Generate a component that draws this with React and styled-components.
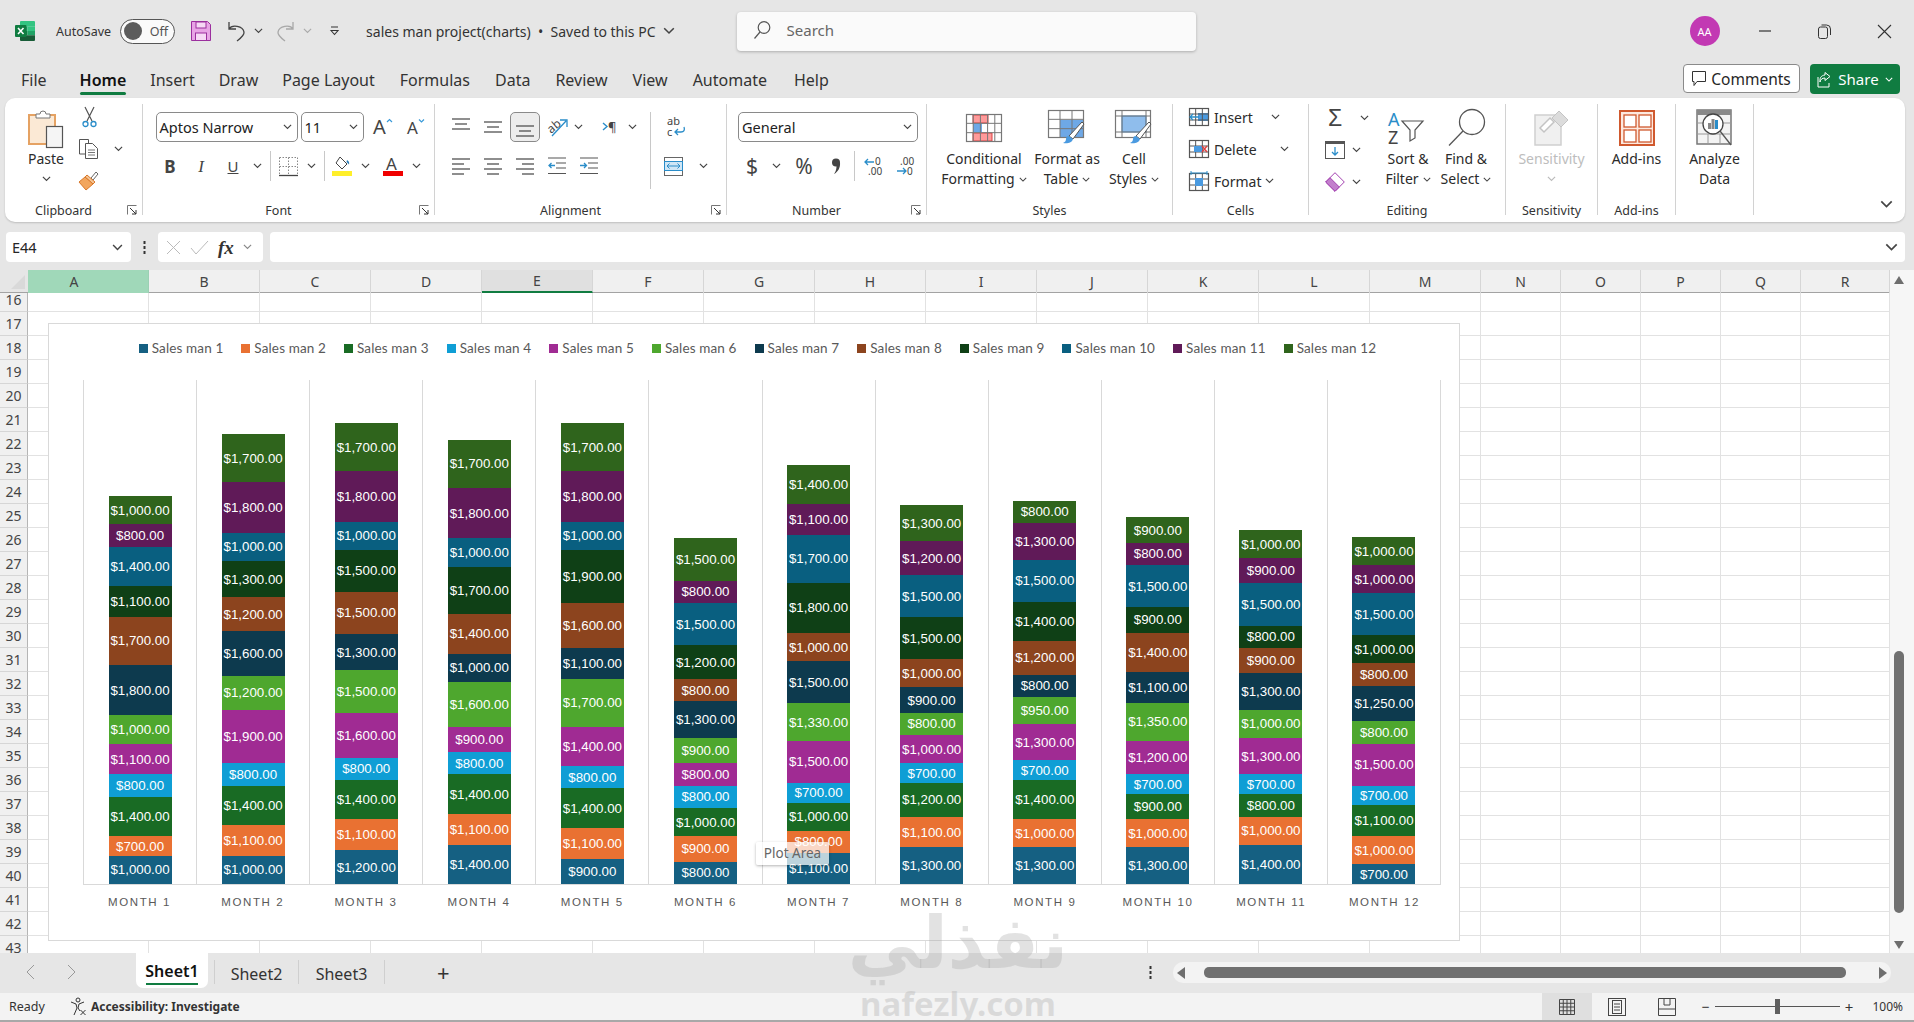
import React from "react";
import styled, { createGlobalStyle } from "styled-components";

const GlobalStyle = createGlobalStyle`
  html, body {
    margin: 0;
    padding: 0;
    background: #e6e6e6;
  }
  * {
    box-sizing: border-box;
  }
`;

const UI_FONT = `"Noto Sans", "Open Sans", sans-serif`;

const Page = styled.div`
  position: relative;
  width: 1914px;
  height: 1022px;
  overflow: hidden;
  background: #e6e6e6;
  font-family: ${UI_FONT};
  color: #262626;
  display: flex;
  flex-direction: column;
`;

/* ---------- title bar ---------- */
const TitleBar = styled.div`
  height: 62px;
  display: flex;
  align-items: center;
  padding-left: 15px;
`;

const TitleItem = styled.div`
  display: flex;
  align-items: center;
  flex-shrink: 0;
  margin-left: ${(p) => p.$ml || 0}px;
  font-size: ${(p) => p.$size || 12.5}px;
  color: ${(p) => p.$color || "#333"};
  white-space: nowrap;
  gap: ${(p) => p.$gap || 0}px;
`;

const Toggle = styled.div`
  width: 55px;
  height: 25px;
  margin-left: 9px;
  border: 1px solid #555;
  border-radius: 13px;
  background: #fafafa;
  display: flex;
  align-items: center;
  flex-shrink: 0;
  padding: 0 6px 0 3px;
  justify-content: space-between;
  font-size: 12.5px;
  color: #555;
`;

const ToggleKnob = styled.span`
  width: 18px;
  height: 18px;
  border-radius: 50%;
  background: #5c5c5c;
`;

const SearchBox = styled.div`
  width: 459px;
  height: 39px;
  margin-left: 62px;
  flex-shrink: 0;
  background: #fafafa;
  border-radius: 4px;
  box-shadow: 0 1px 3px rgba(0, 0, 0, 0.25);
  display: flex;
  align-items: center;
  padding: 0 0 3px 16px;
  gap: 16px;
  font-size: 15px;
  color: #666;
`;

const Avatar = styled.div`
  width: 30px;
  height: 30px;
  margin-left: 494px;
  flex-shrink: 0;
  border-radius: 50%;
  background: #c239b3;
  color: #fff;
  font-size: 11px;
  display: flex;
  align-items: center;
  justify-content: center;
`;

const WinButton = styled.div`
  width: 60px;
  flex-shrink: 0;
  display: flex;
  justify-content: center;
  margin-left: ${(p) => p.$ml || 0}px;
`;

/* ---------- ribbon tabs ---------- */
const TabsRow = styled.div`
  height: 36px;
  display: flex;
  align-items: flex-start;
  padding-left: 21px;
`;

const TabLabel = styled.div`
  position: relative;
  height: 36px;
  line-height: 36px;
  font-size: 16px;
  margin-right: ${(p) => p.$mr || 25}px;
  color: ${(p) => (p.$active ? "#111" : "#333")};
  font-weight: ${(p) => (p.$active ? 600 : 400)};
  white-space: nowrap;
  &::after {
    content: "";
    display: ${(p) => (p.$active ? "block" : "none")};
    position: absolute;
    left: 0;
    right: 0;
    bottom: 3px;
    height: 3px;
    border-radius: 2px;
    background: #107c41;
  }
`;

const TabsRight = styled.div`
  margin-left: auto;
  margin-right: 14px;
  display: flex;
  gap: 10px;
  padding-top: 2px;
`;

const CommentsButton = styled.div`
  width: 117px;
  height: 29px;
  background: #fff;
  border: 1px solid #8a8a8a;
  border-radius: 4px;
  display: flex;
  align-items: center;
  justify-content: center;
  gap: 5px;
  font-size: 15.5px;
`;

const ShareButton = styled.div`
  width: 90px;
  height: 30px;
  background: #107c41;
  border-radius: 4px;
  color: #fff;
  display: flex;
  align-items: center;
  justify-content: center;
  gap: 6px;
  font-size: 15px;
`;

/* ---------- ribbon ---------- */
const Ribbon = styled.div`
  position: relative;
  height: 124px;
  margin: 0 9px 0 5px;
  background: #fff;
  border-radius: 10px;
  box-shadow: 0 1px 2px rgba(0, 0, 0, 0.18);
  display: flex;
  align-items: flex-start;
`;

const RibbonCollapse = styled.div`
  position: absolute;
  right: 12px;
  bottom: 14px;
`;

const Group = styled.div`
  width: ${(p) => p.$w}px;
  height: 111px;
  margin-top: 6px;
  border-right: 1px solid #d2d2d2;
  display: flex;
  flex-direction: column;
  flex-shrink: 0;
`;

const GroupBody = styled.div`
  flex: 1;
  display: flex;
  align-items: flex-start;
  padding-top: ${(p) => p.$pt || 0}px;
  padding-left: ${(p) => p.$pl || 0}px;
`;

const GroupFooter = styled.div`
  display: flex;
  height: 18px;
  margin-bottom: -4px;
  align-items: center;
`;

const GroupLabel = styled.div`
  flex: 1;
  text-align: center;
  font-size: 12.5px;
  color: #333;
  white-space: nowrap;
`;

const Launcher = styled.div`
  width: 20px;
  display: flex;
  justify-content: center;
`;

const ToolRows = styled.div`
  display: flex;
  flex-direction: column;
  gap: ${(p) => p.$gap ?? 9}px;
  margin-top: ${(p) => p.$mt || 0}px;
  width: ${(p) => (p.$w ? `${p.$w}px` : "auto")};
`;

const ToolRow = styled.div`
  display: grid;
  grid-template-columns: ${(p) => p.$cols};
  height: ${(p) => p.$h || 30}px;
  align-items: center;
  justify-items: center;
`;

const Select = styled.div`
  width: ${(p) => p.$w}px;
  height: 30px;
  margin-right: ${(p) => p.$mr || 0}px;
  border: 1px solid #8a8a8a;
  border-radius: 5px;
  display: flex;
  align-items: center;
  justify-content: space-between;
  padding: 0 5px 0 3px;
  font-size: 14.5px;
  color: #222;
  white-space: nowrap;
`;

const SelectedTool = styled.div`
  width: 30px;
  height: 30px;
  background: #ededed;
  border: 1px solid #8a8a8a;
  border-radius: 5px;
  display: flex;
  align-items: center;
  justify-content: center;
`;

const VDivider = styled.div`
  width: 1px;
  height: ${(p) => p.$h || 30}px;
  background: #c8c8c8;
`;

const GlyphText = styled.span`
  font-family: ${(p) => p.$family || UI_FONT};
  font-size: ${(p) => p.$size || 16}px;
  font-weight: ${(p) => p.$weight || 400};
  font-style: ${(p) => (p.$italic ? "italic" : "normal")};
  text-decoration: ${(p) => (p.$underline ? "underline" : "none")};
  color: ${(p) => p.$color || "#444"};
  line-height: 1;
`;

const BigItems = styled.div`
  display: flex;
  padding-left: ${(p) => p.$pl || 0}px;
  margin-top: ${(p) => p.$mt || 0}px;
`;

const BigItem = styled.div`
  width: ${(p) => p.$w}px;
  display: flex;
  flex-direction: column;
  align-items: center;
  font-size: 14px;
  line-height: 20px;
  color: ${(p) => (p.$disabled ? "#bdbdbd" : "#2b2b2b")};
  white-space: nowrap;
`;

const BigIcon = styled.div`
  height: 43px;
  display: flex;
  align-items: ${(p) => p.$align || "center"};
  justify-content: center;
`;

const BigLine = styled.div`
  height: 20px;
  display: flex;
  align-items: center;
  gap: 4px;
`;

const CellRow = styled.div`
  height: 28px;
  display: flex;
  align-items: center;
  font-size: 14px;
  color: #2b2b2b;
`;

const CellText = styled.span`
  margin-left: 5px;
  width: ${(p) => p.$w}px;
`;

const IconSlot = styled.span`
  width: 20px;
  display: flex;
  justify-content: center;
`;

const ClipSide = styled.div`
  display: grid;
  grid-template-columns: 22px 36px;
  grid-auto-rows: 28px;
  row-gap: 4px;
  align-items: center;
  justify-items: center;
  margin-left: 11px;
  margin-top: -3px;
`;

/* ---------- formula bar ---------- */
const FormulaBar = styled.div`
  height: 30px;
  margin: 10px 9px 8px 6px;
  display: flex;
  align-items: stretch;
`;

const NameBox = styled.div`
  width: 125px;
  background: #fff;
  border-radius: 4px;
  display: flex;
  align-items: center;
  justify-content: space-between;
  padding: 0 8px 0 6px;
  font-size: 14.5px;
`;

const DotsSlot = styled.div`
  width: 27px;
  display: flex;
  align-items: center;
  justify-content: center;
`;

const FxBox = styled.div`
  width: 105px;
  background: #fff;
  border-radius: 4px;
  display: flex;
  align-items: center;
  padding-left: 8px;
  gap: 9px;
`;

const FormulaInput = styled.div`
  flex: 1;
  margin-left: 7px;
  background: #fff;
  border-radius: 4px;
  display: flex;
  align-items: center;
  justify-content: flex-end;
  padding-right: 7px;
`;

/* ---------- sheet ---------- */
const SheetArea = styled.div`
  position: relative;
  height: 683px;
  display: flex;
  overflow: hidden;
`;

const SheetMain = styled.div`
  width: 1890px;
  background: #fff;
  overflow: hidden;
`;

const HeaderRow = styled.div`
  position: relative;
  z-index: 1;
  height: 23px;
  display: flex;
  background: #f0f0f0;
  border-bottom: 1px solid #a3a3a3;
`;

const Corner = styled.div`
  width: 28px;
  background: #e6e6e6;
  display: flex;
  align-items: flex-end;
  justify-content: flex-end;
  padding: 0 3px 3px 0;
`;

const ColHead = styled.div`
  width: ${(p) => p.$w}px;
  height: 23px;
  padding-right: ${(p) => (p.$state === "full" ? 28 : 0)}px;
  border-right: 1px solid ${(p) => (p.$state === "full" ? "#9bd0b4" : "#d6d6d6")};
  background: ${(p) =>
    p.$state === "full" ? "#a0d8b9" : p.$state === "cell" ? "#e0e0e0" : "transparent"};
  border-bottom: ${(p) => (p.$state === "cell" ? "2px solid #107c41" : "none")};
  display: flex;
  align-items: center;
  justify-content: center;
  font-size: 14px;
  color: #444;
`;

const GridRows = styled.div`
  margin-top: -5px;
`;

const GridRow = styled.div`
  display: flex;
  height: 24px;
`;

const RowHead = styled.div`
  width: 28px;
  background: #f0f0f0;
  border-right: 1px solid #b5b5b5;
  border-bottom: 1px solid #d6d6d6;
  display: flex;
  align-items: center;
  justify-content: center;
  font-size: 14px;
  color: #444;
`;

const Cell = styled.div`
  width: ${(p) => p.$w}px;
  border-right: 1px solid #e2e2e2;
  border-bottom: 1px solid #e2e2e2;
`;

const VScroll = styled.div`
  width: 24px;
  background: #f6f6f6;
  display: flex;
  flex-direction: column;
  align-items: center;
  justify-content: space-between;
  padding: 6px 7px 4px 0;
`;

const VThumb = styled.div`
  width: 10px;
  height: 262px;
  margin-top: 358px;
  margin-bottom: 20px;
  border-radius: 5px;
  background: #707070;
`;

/* ---------- chart (floats over the cells) ---------- */
const Chart = styled.div`
  position: absolute;
  left: 48px;
  top: 53px;
  width: 1412px;
  height: 618px;
  background: #fff;
  border: 1px solid #d9d9d9;
  z-index: 2;
  display: flex;
  flex-direction: column;
`;

const Legend = styled.div`
  height: 56px;
  padding: 15px 0 0 7px;
  display: flex;
  justify-content: center;
  align-items: flex-start;
  gap: 18px;
`;

const LegendItem = styled.div`
  display: flex;
  align-items: center;
  gap: 4px;
  height: 18px;
  font-family: Lato, "Liberation Sans", sans-serif;
  font-size: 13.5px;
  letter-spacing: 0.13px;
  color: #595959;
  white-space: nowrap;
`;

const Swatch = styled.span`
  width: 9px;
  height: 9px;
  background: ${(p) => p.$color};
`;

const Plot = styled.div`
  margin-left: 34px;
  width: 1358px;
  height: 505px;
  display: grid;
  grid-template-columns: repeat(12, 1fr);
  border-bottom: 1px solid #d9d9d9;
  border-right: 1px solid #d9d9d9;
`;

const PlotCol = styled.div`
  border-left: 1px solid #d9d9d9;
  display: flex;
  flex-direction: column;
  justify-content: flex-end;
  align-items: center;
`;

const Segment = styled.div`
  width: 63px;
  background: ${(p) => p.$color};
  color: #fff;
  font-family: "Liberation Sans", Arial, sans-serif;
  font-size: 13.3px;
  display: flex;
  align-items: center;
  justify-content: center;
  white-space: nowrap;
  overflow: visible;
`;

const Categories = styled.div`
  margin-left: 34px;
  width: 1358px;
  display: grid;
  grid-template-columns: repeat(12, 1fr);
  padding-top: 9px;
`;

const Category = styled.div`
  text-align: center;
  font-family: "Liberation Sans", sans-serif;
  font-size: 11.5px;
  line-height: 16px;
  letter-spacing: 1.6px;
  color: #595959;
  white-space: nowrap;
`;

const Tooltip = styled.div`
  position: absolute;
  left: 756px;
  top: 572px;
  z-index: 3;
  width: 73px;
  height: 23px;
  background: rgba(255, 255, 255, 0.72);
  border-radius: 2px;
  box-shadow: 0 1px 3px rgba(0, 0, 0, 0.3);
  font-size: 13.5px;
  line-height: 23px;
  text-align: center;
  color: #666;
`;

/* ---------- sheet tabs ---------- */
const SheetTabs = styled.div`
  height: 40px;
  display: flex;
  align-items: flex-start;
  background: #e6e6e6;
`;

const NavArrows = styled.div`
  width: 136px;
  height: 38px;
  display: flex;
  align-items: center;
  gap: 32px;
  padding-left: 26px;
`;

const SheetTab = styled.div`
  position: relative;
  width: ${(p) => p.$w}px;
  height: 35px;
  display: flex;
  align-items: center;
  justify-content: center;
  font-size: 16px;
  color: #333;
  ${(p) =>
    p.$active
      ? `
    background: #fff;
    color: #111;
    font-weight: 600;
    border-radius: 0 0 7px 7px;
    &::after {
      content: "";
      position: absolute;
      left: 10px;
      right: 10px;
      bottom: 3px;
      height: 2px;
      background: #107c41;
    }`
      : `margin-top: 3px;`}
`;

const TabSep = styled.div`
  width: 1px;
  height: 24px;
  margin: 7px ${(p) => p.$mr || 0}px 0 ${(p) => p.$ml || 0}px;
  background: #cfcfcf;
`;

const AddSheet = styled.div`
  margin-left: 52px;
  height: 38px;
  display: flex;
  align-items: center;
  font-size: 22px;
  color: #333;
`;

const HBarDots = styled.div`
  margin-left: auto;
  height: 38px;
  display: flex;
  align-items: center;
  margin-right: 21px;
`;

const HScroll = styled.div`
  width: 718px;
  height: 21px;
  margin: 9px 23px 0 0;
  background: #f3f3f3;
  border-radius: 10px;
  display: flex;
  align-items: center;
  justify-content: space-between;
  padding: 0 4px;
`;

const HThumb = styled.div`
  width: 642px;
  height: 11px;
  margin-right: 14px;
  border-radius: 5px;
  background: #707070;
`;

/* ---------- status bar ---------- */
const StatusBar = styled.div`
  height: 27px;
  background: #f3f3f3;
  display: flex;
  align-items: center;
  font-size: 12.5px;
  color: #333;
  padding-left: 9px;
`;

const StatusBold = styled.span`
  font-weight: 700;
  margin-left: 4px;
  font-size: 12px;
`;

const StatusRight = styled.div`
  margin-left: auto;
  height: 27px;
  display: flex;
  align-items: center;
  padding-right: 11px;
`;

const ViewButton = styled.div`
  width: 50px;
  height: 27px;
  display: flex;
  align-items: center;
  justify-content: center;
  background: ${(p) => (p.$active ? "#dfdfdf" : "transparent")};
`;

const ZoomTrack = styled.div`
  position: relative;
  width: 125px;
  height: 1px;
  margin: 0 5px;
  background: #555;
`;

const ZoomKnob = styled.span`
  position: absolute;
  left: 60px;
  top: -7px;
  width: 5px;
  height: 15px;
  background: #5f5f5f;
`;

const BottomLine = styled.div`
  height: 2px;
  background: #a8a8a8;
`;

/* ---------- watermark ---------- */
const Watermark = styled.div`
  position: absolute;
  left: 846px;
  top: 910px;
  width: 224px;
  z-index: 5;
  pointer-events: none;
  text-align: center;
  color: rgba(170, 170, 170, 0.34);
  font-weight: 700;
`;

const WatermarkAr = styled.div`
  font-family: "DejaVu Sans", "Noto Sans", sans-serif;
  font-size: 72px;
  line-height: 66px;
`;

const WatermarkEn = styled.div`
  font-family: "Noto Sans", sans-serif;
  font-size: 33px;
  line-height: 30px;
  margin-top: 13px;
`;

/* ---------- icons ---------- */
const Svg = styled.svg`
  display: block;
  flex-shrink: 0;
  overflow: visible;
`;

const Chev = ({ size = 9, color = "#444", ml = 0 }) => (
  <Svg width={size} height={size * 0.6} viewBox="0 0 10 6" style={ml ? { marginLeft: ml } : undefined}>
    <path d="M1 1l4 4 4-4" fill="none" stroke={color} strokeWidth="1.3" />
  </Svg>
);

const ExcelLogo = () => (
  <Svg width="20" height="20" viewBox="0 0 20 20">
    <path d="M6 0h13a1 1 0 011 1v4.8H5V1a1 1 0 011-1z" fill="#33c481" />
    <path d="M5 5.8h7.5v4.2H5z" fill="#21a366" />
    <path d="M12.5 5.8H20V10h-7.5z" fill="#33c481" />
    <path d="M5 10h7.5v4.2H5z" fill="#107c41" />
    <path d="M12.5 10H20v4.2h-7.5z" fill="#21a366" />
    <path d="M5 14.2h15V19a1 1 0 01-1 1H6a1 1 0 01-1-1z" fill="#185c37" />
    <rect x="0" y="4" width="11.5" height="12" rx="1" fill="#107c41" />
    <path d="M3 7l5.5 6M8.5 7L3 13" stroke="#fff" strokeWidth="1.6" />
  </Svg>
);

const SaveIcon = () => (
  <Svg width="20" height="20" viewBox="0 0 20 20">
    <path d="M.5.5h16l3 3v16H.5z" fill="#e7a3e5" stroke="#9b2f9e" />
    <rect x="5" y="1" width="10" height="6" fill="#f6d8f5" stroke="#9b2f9e" />
    <rect x="4.5" y="12" width="11" height="7.5" fill="#f6d8f5" stroke="#9b2f9e" />
  </Svg>
);

const UndoIcon = ({ flip, color }) => (
  <Svg width="19" height="21" viewBox="0 0 19 21" style={flip ? { transform: "scaleX(-1)" } : undefined}>
    <path d="M2 1v7h7M2 8c3-5 14-3 15 3 .5 3-3 6-7 9" fill="none" stroke={color} strokeWidth="1.3" />
  </Svg>
);

const QuickAccess = () => (
  <Svg width="11" height="10" viewBox="0 0 11 10">
    <path d="M2 1h7M2 4.500l3.500 4 3.500-4z" fill="none" stroke="#333" strokeWidth="1.1" />
  </Svg>
);

const SearchIcon = () => (
  <Svg width="18" height="20" viewBox="0 0 18 20">
    <circle cx="11" cy="7.500" r="5.800" fill="none" stroke="#555" strokeWidth="1.200" />
    <path d="M7 12L1.500 18.500" stroke="#555" strokeWidth="1.200" />
  </Svg>
);

const PasteIcon = () => (
  <Svg width="36" height="40" viewBox="0 0 36 40">
    <rect x="1" y="6" width="26" height="29" fill="#fbe9d5" stroke="#e5a263" strokeWidth="2" />
    <path d="M8 9V5h4a3 3 0 016 0h4v4z" fill="#fff" stroke="#777" />
    <rect x="18.500" y="17.500" width="16" height="21" fill="#f5f5f5" stroke="#555" strokeWidth="1.200" />
  </Svg>
);

const CutIcon = () => (
  <Svg width="15" height="21" viewBox="0 0 15 21">
    <path d="M3 0l7 14M12 0L5 14" stroke="#555" strokeWidth="1.200" fill="none" />
    <circle cx="3.500" cy="17" r="2.500" fill="none" stroke="#2a8dc9" strokeWidth="1.300" />
    <circle cx="11.500" cy="17" r="2.500" fill="none" stroke="#2a8dc9" strokeWidth="1.300" />
  </Svg>
);

const CopyIcon = () => (
  <Svg width="20" height="20" viewBox="0 0 20 20">
    <path d="M6 15H.5V.5h9V4" fill="#fff" stroke="#555" />
    <path d="M6.500 4.500h7l5 5v10h-12z" fill="#fff" stroke="#555" />
    <path d="M9 11h7M9 13.500h7M9 16h7" stroke="#777" />
  </Svg>
);

const BrushIcon = () => (
  <Svg width="20" height="20" viewBox="0 0 20 20">
    <path d="M12 7l5-6 2 2-5 6z" fill="#fff" stroke="#666" />
    <path d="M8 4l8 7-2 2-8-7z" fill="#f5c493" stroke="#d9782a" />
    <path d="M6 6L0 11l7 8 7-6z" fill="#f2a65e" stroke="#d9782a" />
  </Svg>
);

const LauncherIcon = () => (
  <Svg width="10" height="10" viewBox="0 0 10 10">
    <path d="M.5 9.500V.5h9" fill="none" stroke="#777" />
    <path d="M3 3l6 6M5 9h4V5" fill="none" stroke="#333" />
  </Svg>
);

const GrowFont = ({ up }) => (
  <Svg width="22" height="26" viewBox="0 0 22 26">
    <text x="0" y="20" fontFamily="Noto Sans" fontSize={up ? 20 : 17} fill="#444">A</text>
    <path d={up ? "M14 8l2.500-2.500L19 8" : "M12 5.500L14.500 8 17 5.500"} fill="none" stroke="#3a9ad9" strokeWidth="1.200" />
  </Svg>
);

const BordersIcon = () => (
  <Svg width="19" height="19" viewBox="0 0 19 19">
    <path d="M.5.5h18v18M.5.5v18M9.500.5v18M.5 9.500h18" fill="none" stroke="#888" strokeDasharray="1.500 1.500" />
    <path d="M0 18.500h19" stroke="#444" strokeWidth="1.300" />
  </Svg>
);

const FillIcon = () => (
  <Svg width="21" height="20" viewBox="0 0 21 20">
    <path d="M8 1l7 7-5 5-6-6z" fill="#fff" stroke="#444" />
    <path d="M15 4c2 1 2.500 3 2 4.500L14.500 6z" fill="#2a7db8" />
    <rect x="0" y="15" width="20" height="5" fill="#ffef2a" />
  </Svg>
);

const FontColorIcon = () => (
  <Svg width="20" height="26" viewBox="0 0 20 26">
    <text x="3" y="16.500" fontFamily="Noto Sans" fontSize="17" fill="#444">A</text>
    <rect x="0" y="18" width="20" height="5" fill="#f00000" />
  </Svg>
);

const LinesIcon = ({ rows }) => (
  <Svg width="18" height="24" viewBox="0 0 18 24">
    {rows.map(([x1, x2, y], i) => (
      <path key={i} d={`M${x1} ${y}h${x2 - x1}`} stroke="#444" strokeWidth="1.200" />
    ))}
  </Svg>
);

const IndentIcon = ({ out }) => (
  <Svg width="18" height="18" viewBox="0 0 18 18">
    <path d="M0 1h18M8 6h10M8 11h10M0 16.500h18" stroke="#555" strokeWidth="1.200" />
    <path
      d={out ? "M7 8.500H1M3.500 6L1 8.500 3.500 11" : "M0 8.500h6M4 6l2.500 2.500L4 11"}
      fill="none"
      stroke="#2a8dc9"
      strokeWidth="1.300"
    />
  </Svg>
);

const OrientIcon = () => (
  <Svg width="21" height="24" viewBox="0 0 21 24">
    <text x="0" y="16" fontFamily="Noto Sans" fontSize="12" fill="#444" transform="rotate(-40 6 12)">ab</text>
    <path d="M5 21L19 6M13 5h7v7" fill="none" stroke="#2a8dc9" strokeWidth="1.300" />
  </Svg>
);

const RtlIcon = () => (
  <Svg width="16" height="20" viewBox="0 0 16 20">
    <path d="M1 6l4 3.500L1 13" fill="none" stroke="#2a8dc9" strokeWidth="1.400" />
    <text x="6" y="15" fontFamily="Noto Sans" fontSize="13" fill="#444">¶</text>
  </Svg>
);

const WrapIcon = () => (
  <Svg width="19" height="24" viewBox="0 0 19 24">
    <text x="0" y="10" fontFamily="Noto Sans" fontSize="11" fill="#444">ab</text>
    <text x="0" y="21" fontFamily="Noto Sans" fontSize="11" fill="#444">c</text>
    <path d="M17 12c1 3 0 5-3 5H8M11 14l-3 3 3 3" fill="none" stroke="#2a8dc9" strokeWidth="1.300" />
  </Svg>
);

const MergeIcon = () => (
  <Svg width="19" height="19" viewBox="0 0 19 19">
    <rect x=".5" y=".5" width="18" height="18" fill="#fff" stroke="#666" />
    <rect x=".5" y="4.500" width="18" height="9" fill="#cfe6f6" stroke="#2a8dc9" />
    <path d="M3 9h13M5.500 6.500L3 9l2.500 2.500M13.500 6.500L16 9l-2.500 2.500" fill="none" stroke="#2a8dc9" />
  </Svg>
);

const CommaIcon = () => (
  <Svg width="10" height="17" viewBox="0 0 10 17">
    <circle cx="5" cy="4.500" r="4" fill="#444" />
    <path d="M9 4.500c.5 5-2 9.500-6 11.500 2-3 2.500-5 2.500-8z" fill="#444" />
  </Svg>
);

const DecimalIcon = ({ inc }) => (
  <Svg width="21" height="24" viewBox="0 0 21 24">
    <text x={inc ? 11 : 4} y="11" fontFamily="Noto Sans" fontSize="10" fill="#444">{inc ? "0" : ".00"}</text>
    <text x={inc ? 4 : 11} y="21" fontFamily="Noto Sans" fontSize="10" fill="#444">{inc ? ".00" : "0"}</text>
    <path
      d={inc ? "M10 8H1M4 5L1 8l3 3" : "M1 17h9M7 14l3 3-3 3"}
      fill="none"
      stroke="#2a8dc9"
      strokeWidth="1.300"
    />
  </Svg>
);

const TableFrame = ({ w, h, cols, rows, color = "#777" }) => (
  <g fill="none" stroke={color}>
    <rect x=".5" y=".5" width={w - 1} height={h - 1} strokeWidth="1.200" />
    {Array.from({ length: cols - 1 }, (_, i) => (
      <path key={`c${i}`} d={`M${((i + 1) * w) / cols} 0v${h}`} />
    ))}
    {Array.from({ length: rows - 1 }, (_, i) => (
      <path key={`r${i}`} d={`M0 ${((i + 1) * h) / rows}h${w}`} />
    ))}
  </g>
);

const ConditionalIcon = () => (
  <Svg width="36" height="28" viewBox="0 0 36 28">
    <rect x="7" y="1" width="15" height="8" fill="#ff9a9a" stroke="#d94040" />
    <rect x="7" y="9" width="9" height="9" fill="#6ea8e6" />
    <rect x="7" y="19" width="19" height="8" fill="#ff9a9a" stroke="#d94040" />
    <TableFrame w={36} h={28} cols={5} rows={3} />
  </Svg>
);

const BrushOver = ({ x, y }) => (
  <g transform={`translate(${x} ${y})`}>
    <path d="M20 0l2 2L11 17l-4-3z" fill="#fff" stroke="#555" />
    <path d="M7 14l4 3c-1 4-6 5-10 4 2-1 3-2 3-4 0-2 1-3 3-3z" fill="#4a9ae0" />
  </g>
);

const FormatTableIcon = () => (
  <Svg width="38" height="36" viewBox="0 0 38 36">
    <rect x="12" y="10" width="24" height="18" fill="#6ea8e6" />
    <TableFrame w={36} h={28} cols={3} rows={3} />
    <BrushOver x="14" y="12" />
  </Svg>
);

const CellStylesIcon = () => (
  <Svg width="38" height="36" viewBox="0 0 38 36">
    <rect x="7" y="6" width="24" height="16" fill="#8fbdec" stroke="#4a8fd0" />
    <g fill="none" stroke="#777">
      <rect x=".5" y=".5" width="35" height="27" strokeWidth="1.200" />
      <path d="M0 6h36M7 0v28M31 0v28M0 22h36" />
    </g>
    <BrushOver x="14" y="12" />
  </Svg>
);

const InsertCellsIcon = () => (
  <Svg width="20" height="18" viewBox="0 0 20 18">
    <rect x="9" y="5" width="10" height="8" fill="#4a9ae0" />
    <TableFrame w={20} h={18} cols={3} rows={3} color="#555" />
    <path d="M10 9H1M4 6L1 9l3 3" fill="none" stroke="#2a8dc9" strokeWidth="1.300" />
  </Svg>
);

const DeleteCellsIcon = () => (
  <Svg width="20" height="18" viewBox="0 0 20 18">
    <TableFrame w={20} h={18} cols={3} rows={3} color="#555" />
    <rect x="5" y="6" width="8" height="6" fill="#4a9ae0" />
    <path d="M13 6l5 6M18 6l-5 6" stroke="#e04040" strokeWidth="1.400" />
  </Svg>
);

const FormatCellsIcon = () => (
  <Svg width="20" height="20" viewBox="0 0 20 20">
    <g transform="translate(0 2)">
      <TableFrame w={20} h={18} cols={3} rows={3} color="#555" />
      <rect x="6" y="5" width="8" height="8" fill="#4a9ae0" />
    </g>
    <path d="M2 2h16M2 0v4M18 0v4" stroke="#2a8dc9" />
  </Svg>
);

const FillDownIcon = () => (
  <Svg width="20" height="18" viewBox="0 0 20 18">
    <rect x=".5" y=".5" width="19" height="17" fill="#fff" stroke="#555" />
    <rect x="0" y="0" width="20" height="3" fill="#555" />
    <path d="M10 6v8M7 11l3 3 3-3" fill="none" stroke="#2a8dc9" strokeWidth="1.300" />
  </Svg>
);

const EraserIcon = () => (
  <Svg width="20" height="20" viewBox="0 0 20 20">
    <path d="M10 .7L19.300 10 10 19.300.7 10z" fill="#fff" stroke="#a340b0" />
    <path d="M5 5.700L14.300 15 10 19.300.7 10z" fill="#c27fcc" stroke="#a340b0" />
  </Svg>
);

const SortIcon = () => (
  <Svg width="41" height="40" viewBox="0 0 41 40">
    <text x="0" y="18" fontFamily="Noto Sans" fontSize="18" fill="#2a8dc9">A</text>
    <text x="0" y="36" fontFamily="Noto Sans" fontSize="18" fill="#444">Z</text>
    <path d="M14 13h21l-8 9v8l-5 3V22z" fill="#fff" stroke="#555" strokeWidth="1.200" />
  </Svg>
);

const FindIcon = () => (
  <Svg width="37" height="37" viewBox="0 0 37 37">
    <circle cx="24" cy="13" r="12.500" fill="#fff" stroke="#555" strokeWidth="1.300" />
    <path d="M15 22L1 36.500" stroke="#555" strokeWidth="1.300" />
  </Svg>
);

const SensitivityIcon = () => (
  <Svg width="35" height="36" viewBox="0 0 35 36">
    <rect x="1" y="5" width="26" height="30" fill="#f0f0f0" stroke="#cfcfcf" strokeWidth="1.500" />
    <path d="M6 18L16 8l4 4-10 10z" fill="#fff" stroke="#c4c4c4" strokeWidth="1.500" />
    <path d="M18 8l7-7 9 9-7 7z" fill="#dcdcdc" stroke="#c4c4c4" />
  </Svg>
);

const AddinsIcon = () => (
  <Svg width="36" height="36" viewBox="0 0 36 36">
    <rect x="1" y="1" width="34" height="34" fill="#fde9df" stroke="#d0592e" strokeWidth="2" />
    <rect x="5" y="5" width="12" height="12" fill="#fff" stroke="#d0592e" strokeWidth="1.300" />
    <rect x="20" y="5" width="12" height="12" fill="#fff" stroke="#d0592e" strokeWidth="1.300" />
    <rect x="5" y="20" width="12" height="12" fill="#fff" stroke="#d0592e" strokeWidth="1.300" />
    <rect x="20" y="20" width="12" height="12" fill="#fff" stroke="#d0592e" strokeWidth="1.300" />
  </Svg>
);

const AnalyzeIcon = () => (
  <Svg width="37" height="37" viewBox="0 0 37 37">
    <rect x="1" y="1" width="34" height="34" fill="#f3f3f3" stroke="#777" strokeWidth="1.500" />
    <rect x="1" y="1" width="34" height="5" fill="#888" />
    <path d="M1 14h34M1 25h34M12 25v10M24 25v10" stroke="#999" />
    <circle cx="17" cy="15" r="10" fill="#fff" stroke="#444" strokeWidth="1.300" />
    <rect x="12" y="14" width="3" height="6" fill="#888" />
    <rect x="15.500" y="10" width="3" height="10" fill="#888" />
    <rect x="19" y="11" width="3" height="9" fill="#2a8dc9" />
    <path d="M24 22l11 14" stroke="#555" strokeWidth="1.300" />
  </Svg>
);

const AccessibilityIcon = () => (
  <Svg width="17" height="19" viewBox="0 0 17 19">
    <circle cx="8" cy="3" r="2" fill="none" stroke="#333" />
    <path d="M1 5l5 2 1 4-3 7M14 5L9 7l-1 4 2 3" fill="none" stroke="#333" />
    <path d="M10.500 13l5 5M15.500 13l-5 5" stroke="#333" />
  </Svg>
);

const NormalViewIcon = () => (
  <Svg width="16" height="16" viewBox="0 0 16 16">
    <path d="M.5.500h15v15H.5zM.5 4.250h15M.5 8h15M.5 11.750h15M4.250 0v16M8 0v16M11.750 0v16" fill="none" stroke="#444" />
  </Svg>
);

const PageViewIcon = () => (
  <Svg width="18" height="18" viewBox="0 0 18 18">
    <rect x=".5" y=".5" width="17" height="17" fill="none" stroke="#444" />
    <rect x="4.500" y="2.500" width="9" height="13" fill="none" stroke="#444" />
    <path d="M6 6h6M6 9h6M6 12h6" stroke="#444" />
  </Svg>
);

const BreakViewIcon = () => (
  <Svg width="18" height="18" viewBox="0 0 18 18">
    <path d="M.5.500h17v17H.5zM.5 11h17M6 .5V7h6V.5" fill="none" stroke="#444" />
  </Svg>
);

/* ---------- data ---------- */
const COLORS = [
  "#156082", "#e97132", "#196b24", "#0f9ed5", "#a02b93", "#4ea72e",
  "#0d3a4e", "#8c441e", "#0f4016", "#095f80", "#601a58", "#2f641c",
];

const MONTHS = [
  [1000, 700, 1400, 800, 1100, 1000, 1800, 1700, 1100, 1400, 800, 1000],
  [1000, 1100, 1400, 800, 1900, 1200, 1600, 1200, 1300, 1000, 1800, 1700],
  [1200, 1100, 1400, 800, 1600, 1500, 1300, 1500, 1500, 1000, 1800, 1700],
  [1400, 1100, 1400, 800, 900, 1600, 1000, 1400, 1700, 1000, 1800, 1700],
  [900, 1100, 1400, 800, 1400, 1700, 1100, 1600, 1900, 1000, 1800, 1700],
  [800, 900, 1000, 800, 800, 900, 1300, 800, 1200, 1500, 800, 1500],
  [1100, 800, 1000, 700, 1500, 1330, 1500, 1000, 1800, 1700, 1100, 1400],
  [1300, 1100, 1200, 700, 1000, 800, 900, 1000, 1500, 1500, 1200, 1300],
  [1300, 1000, 1400, 700, 1300, 950, 800, 1200, 1400, 1500, 1300, 800],
  [1300, 1000, 900, 700, 1200, 1350, 1100, 1400, 900, 1500, 800, 900],
  [1400, 1000, 800, 700, 1300, 1000, 1300, 900, 800, 1500, 900, 1000],
  [700, 1000, 1100, 700, 1500, 800, 1250, 800, 1000, 1500, 1000, 1000],
];

const COLUMNS = [
  ["A", 121], ["B", 111], ["C", 111], ["D", 111], ["E", 111], ["F", 111], ["G", 111],
  ["H", 111], ["I", 111], ["J", 111], ["K", 111], ["L", 111], ["M", 111],
  ["N", 80], ["O", 80], ["P", 80], ["Q", 80], ["R", 89],
];

const ROWS = Array.from({ length: 28 }, (_, i) => i + 16);
const TABS = [
  ["File", 33], ["Home", 24], ["Insert", 24], ["Draw", 24], ["Page Layout"], ["Formulas"],
  ["Data"], ["Review"], ["View"], ["Automate", 27], ["Help"],
];
const money = (v) => `$${v.toLocaleString("en-US")}.00`;
const PX_PER_DOLLAR = 0.0281;

const GroupEnd = ({ label, launcher }) => (
  <GroupFooter>
    <GroupLabel>{label}</GroupLabel>
    {launcher && (
      <Launcher>
        <LauncherIcon />
      </Launcher>
    )}
  </GroupFooter>
);

const ToolbarRibbon = () => (
  <Ribbon>
    <Group $w={138}>
      <GroupBody $pl={20} $pt={2}>
        <BigItem $w={42}>
          <BigIcon $align="flex-end">
            <PasteIcon />
          </BigIcon>
          <BigLine>Paste</BigLine>
          <BigLine>
            <Chev />
          </BigLine>
        </BigItem>
        <ClipSide>
          <CutIcon />
          <span />
          <CopyIcon />
          <Chev />
          <BrushIcon />
          <span />
        </ClipSide>
      </GroupBody>
      <GroupEnd label="Clipboard" launcher />
    </Group>

    <Group $w={292}>
      <GroupBody $pt={8} $pl={11}>
        <ToolRows>
          <ToolRow $cols="145px 66px 38px 30px">
            <Select $w={142}>
              Aptos Narrow
              <Chev />
            </Select>
            <Select $w={63}>
              11
              <Chev />
            </Select>
            <GrowFont up />
            <GrowFont />
          </ToolRow>
          <ToolRow $cols="32px 30px 34px 14px 12px 24px 22px 4px 32px 14px 42px 4px">
            <GlyphText $weight={700} $size={17}>B</GlyphText>
            <GlyphText $italic $family="'Liberation Serif', serif" $size={17}>I</GlyphText>
            <GlyphText $underline $size={15}>U</GlyphText>
            <Chev />
            <VDivider />
            <BordersIcon />
            <Chev />
            <VDivider />
            <FillIcon />
            <Chev />
            <FontColorIcon />
            <Chev />
          </ToolRow>
        </ToolRows>
      </GroupBody>
      <GroupEnd label="Font" launcher />
    </Group>

    <Group $w={292}>
      <GroupBody $pt={8} $pl={10}>
        <ToolRows $w={205}>
          <ToolRow $cols="32px 32px 32px 32px 10px 7px 40px 4px">
            <LinesIcon rows={[[0, 18, 4], [3, 15, 9], [0, 18, 14]]} />
            <LinesIcon rows={[[0, 18, 7], [3, 15, 12], [0, 18, 17]]} />
            <SelectedTool>
              <LinesIcon rows={[[0, 18, 11], [3, 15, 16], [0, 18, 21]]} />
            </SelectedTool>
            <OrientIcon />
            <Chev />
            <span />
            <RtlIcon />
            <Chev />
          </ToolRow>
          <ToolRow $cols="32px 32px 32px 32px 32px">
            <LinesIcon rows={[[0, 18, 5], [0, 12, 10], [0, 18, 15], [0, 12, 20]]} />
            <LinesIcon rows={[[0, 18, 5], [3, 15, 10], [0, 18, 15], [3, 15, 20]]} />
            <LinesIcon rows={[[0, 18, 5], [6, 18, 10], [0, 18, 15], [6, 18, 20]]} />
            <IndentIcon out />
            <IndentIcon />
          </ToolRow>
        </ToolRows>
        <VDivider $h={77} />
        <ToolRows>
          <ToolRow $cols="50px">
            <WrapIcon />
          </ToolRow>
          <ToolRow $cols="44px 16px">
            <MergeIcon />
            <Chev />
          </ToolRow>
        </ToolRows>
      </GroupBody>
      <GroupEnd label="Alignment" launcher />
    </Group>

    <Group $w={200}>
      <GroupBody $pt={8} $pl={11}>
        <ToolRows>
          <ToolRow $cols="180px">
            <Select $w={180}>
              General
              <Chev />
            </Select>
          </ToolRow>
          <ToolRow $cols="28px 20px 36px 28px 8px 32px 32px">
            <GlyphText $size={21}>$</GlyphText>
            <Chev />
            <GlyphText $size={21}>%</GlyphText>
            <CommaIcon />
            <VDivider />
            <DecimalIcon inc />
            <DecimalIcon />
          </ToolRow>
        </ToolRows>
      </GroupBody>
      <GroupEnd label="Number" launcher />
    </Group>

    <Group $w={246}>
      <GroupBody $pt={2}>
        <BigItems $pl={8}>
          <BigItem $w={98}>
            <BigIcon><ConditionalIcon /></BigIcon>
            <BigLine>Conditional</BigLine>
            <BigLine>Formatting <Chev size={8} /></BigLine>
          </BigItem>
          <BigItem $w={68}>
            <BigIcon><FormatTableIcon /></BigIcon>
            <BigLine>Format as</BigLine>
            <BigLine>Table <Chev size={8} /></BigLine>
          </BigItem>
          <BigItem $w={66}>
            <BigIcon><CellStylesIcon /></BigIcon>
            <BigLine>Cell</BigLine>
            <BigLine>Styles <Chev size={8} /></BigLine>
          </BigItem>
        </BigItems>
      </GroupBody>
      <GroupEnd label="Styles" />
    </Group>

    <Group $w={136}>
      <GroupBody $pl={16}>
        <ToolRows $gap={4} $mt={-1}>
          <CellRow><InsertCellsIcon /><CellText $w={57}>Insert</CellText><Chev /></CellRow>
          <CellRow><DeleteCellsIcon /><CellText $w={66}>Delete</CellText><Chev /></CellRow>
          <CellRow><FormatCellsIcon /><CellText $w={51}>Format</CellText><Chev /></CellRow>
        </ToolRows>
      </GroupBody>
      <GroupEnd label="Cells" />
    </Group>

    <Group $w={197}>
      <GroupBody $pl={16}>
        <ToolRows $gap={4} $w={48}>
          <CellRow>
            <IconSlot>
              <GlyphText $size={23} $family="'Liberation Sans', sans-serif">Σ</GlyphText>
            </IconSlot>
            <Chev ml={15} />
          </CellRow>
          <CellRow><FillDownIcon /><Chev ml={7} /></CellRow>
          <CellRow><EraserIcon /><Chev ml={7} /></CellRow>
        </ToolRows>
        <BigItems $mt={2}>
          <BigItem $w={70}>
            <BigIcon><SortIcon /></BigIcon>
            <BigLine>Sort &amp;</BigLine>
            <BigLine>Filter <Chev size={8} /></BigLine>
          </BigItem>
          <BigItem $w={46}>
            <BigIcon><FindIcon /></BigIcon>
            <BigLine>Find &amp;</BigLine>
            <BigLine>Select <Chev size={8} /></BigLine>
          </BigItem>
        </BigItems>
      </GroupBody>
      <GroupEnd label="Editing" />
    </Group>

    <Group $w={92}>
      <GroupBody $pt={2}>
        <BigItem $w={92} $disabled>
          <BigIcon><SensitivityIcon /></BigIcon>
          <BigLine>Sensitivity</BigLine>
          <BigLine><Chev color="#bbb" /></BigLine>
        </BigItem>
      </GroupBody>
      <GroupEnd label="Sensitivity" />
    </Group>

    <Group $w={78}>
      <GroupBody $pt={2}>
        <BigItem $w={78}>
          <BigIcon><AddinsIcon /></BigIcon>
          <BigLine>Add-ins</BigLine>
        </BigItem>
      </GroupBody>
      <GroupEnd label="Add-ins" />
    </Group>

    <Group $w={78}>
      <GroupBody $pt={2}>
        <BigItem $w={78}>
          <BigIcon><AnalyzeIcon /></BigIcon>
          <BigLine>Analyze</BigLine>
          <BigLine>Data</BigLine>
        </BigItem>
      </GroupBody>
    </Group>

    <RibbonCollapse>
      <Chev size={13} />
    </RibbonCollapse>
  </Ribbon>
);

const StackedChart = () => (
  <Chart>
    <Legend>
      {COLORS.map((c, i) => (
        <LegendItem key={c}>
          <Swatch $color={c} />
          Sales man {i + 1}
        </LegendItem>
      ))}
    </Legend>
    <Plot>
      {MONTHS.map((values, m) => (
        <PlotCol key={m}>
          {values
            .map((v, s) => (
              <Segment key={s} $color={COLORS[s]} style={{ height: v * PX_PER_DOLLAR }}>
                {money(v)}
              </Segment>
            ))
            .reverse()}
        </PlotCol>
      ))}
    </Plot>
    <Categories>
      {MONTHS.map((_, m) => (
        <Category key={m}>MONTH {m + 1}</Category>
      ))}
    </Categories>
  </Chart>
);

export default function App() {
  return (
    <Page>
      <GlobalStyle />

      <TitleBar>
        <ExcelLogo />
        <TitleItem $ml={21}>AutoSave</TitleItem>
        <Toggle>
          <ToggleKnob />
          Off
        </Toggle>
        <TitleItem $ml={16}><SaveIcon /></TitleItem>
        <TitleItem $ml={16}><UndoIcon color="#444" /></TitleItem>
        <TitleItem $ml={8}><Chev /></TitleItem>
        <TitleItem $ml={13}><UndoIcon flip color="#a8a8a8" /></TitleItem>
        <TitleItem $ml={8}><Chev color="#aaa" /></TitleItem>
        <TitleItem $ml={17}><QuickAccess /></TitleItem>
        <TitleItem $ml={26} $size={14} $gap={7}>
          sales man project(charts) &nbsp;•&nbsp; Saved to this PC
          <Chev size={12} />
        </TitleItem>
        <SearchBox>
          <SearchIcon />
          Search
        </SearchBox>
        <Avatar>AA</Avatar>
        <WinButton $ml={15}>
          <Svg width="12" height="2" viewBox="0 0 12 2"><path d="M0 1h12" stroke="#333" strokeWidth="1.200" /></Svg>
        </WinButton>
        <WinButton>
          <Svg width="13" height="15" viewBox="0 0 13 15">
            <rect x=".5" y="3" width="9" height="11.500" rx="2" fill="none" stroke="#333" />
            <path d="M3.500 1h5a4 4 0 014 4v6" fill="none" stroke="#333" />
          </Svg>
        </WinButton>
        <WinButton>
          <Svg width="15" height="15" viewBox="0 0 15 15"><path d="M1 1l13 13M14 1L1 14" stroke="#333" strokeWidth="1.100" /></Svg>
        </WinButton>
      </TitleBar>

      <TabsRow>
        {TABS.map(([name, mr]) => (
          <TabLabel key={name} $active={name === "Home"} $mr={mr}>
            {name}
          </TabLabel>
        ))}
        <TabsRight>
          <CommentsButton>
            <Svg width="14" height="16" viewBox="0 0 14 16">
              <path d="M.5.500h13v10H5l-3 4v-4H.5z" fill="none" stroke="#333" />
            </Svg>
            Comments
          </CommentsButton>
          <ShareButton>
            <Svg width="15" height="17" viewBox="0 0 15 17">
              <path d="M8 1.500l5 4-5 4V7C5 7 3.500 8.500 3 11c-.5-4 1-6.500 5-7zM1 6v10h11v-4" fill="none" stroke="#fff" />
            </Svg>
            Share
            <Chev color="#fff" size={8} />
          </ShareButton>
        </TabsRight>
      </TabsRow>

      <ToolbarRibbon />

      <FormulaBar>
        <NameBox>
          E44
          <Chev size={11} />
        </NameBox>
        <DotsSlot>
          <Svg width="3" height="13" viewBox="0 0 3 13">
            <path d="M1.500 0v3M1.500 5v3M1.500 10v3" stroke="#333" strokeWidth="2" />
          </Svg>
        </DotsSlot>
        <FxBox>
          <Svg width="15" height="15" viewBox="0 0 15 15"><path d="M1 1l13 13M14 1L1 14" stroke="#bbb" /></Svg>
          <Svg width="19" height="15" viewBox="0 0 19 15"><path d="M1 8l5 6L18 1" fill="none" stroke="#bbb" /></Svg>
          <GlyphText $italic $weight={700} $size={19} $color="#333" $family="'Liberation Serif', serif">fx</GlyphText>
          <Chev color="#888" />
        </FxBox>
        <FormulaInput>
          <Chev size={13} />
        </FormulaInput>
      </FormulaBar>

      <SheetArea>
        <SheetMain>
          <HeaderRow>
            <Corner>
              <Svg width="14" height="14" viewBox="0 0 14 14"><path d="M14 0v14H0z" fill="#d9d9d9" /></Svg>
            </Corner>
            {COLUMNS.map(([name, w]) => (
              <ColHead
                key={name}
                $w={w}
                $state={name === "A" ? "full" : name === "E" ? "cell" : undefined}
              >
                {name}
              </ColHead>
            ))}
          </HeaderRow>
          <GridRows>
            {ROWS.map((row) => (
              <GridRow key={row}>
                <RowHead>{row}</RowHead>
                {COLUMNS.map(([name, w]) => (
                  <Cell key={name} $w={w} />
                ))}
              </GridRow>
            ))}
          </GridRows>
        </SheetMain>
        <VScroll>
          <Svg width="10" height="8" viewBox="0 0 10 8"><path d="M5 0l5 8H0z" fill="#6e6e6e" /></Svg>
          <VThumb />
          <Svg width="10" height="8" viewBox="0 0 10 8"><path d="M0 0h10L5 8z" fill="#6e6e6e" /></Svg>
        </VScroll>
        <StackedChart />
        <Tooltip>Plot Area</Tooltip>
      </SheetArea>

      <SheetTabs>
        <NavArrows>
          <Svg width="9" height="16" viewBox="0 0 9 16"><path d="M8 1L1 8l7 7" fill="none" stroke="#999" /></Svg>
          <Svg width="9" height="16" viewBox="0 0 9 16"><path d="M1 1l7 7-7 7" fill="none" stroke="#999" /></Svg>
        </NavArrows>
        <SheetTab $active $w={72}>Sheet1</SheetTab>
        <TabSep $ml={6} />
        <SheetTab $w={83}>Sheet2</SheetTab>
        <TabSep />
        <SheetTab $w={85}>Sheet3</SheetTab>
        <TabSep />
        <AddSheet>+</AddSheet>
        <HBarDots>
          <Svg width="3" height="13" viewBox="0 0 3 13">
            <path d="M1.500 0v3M1.500 5v3M1.500 10v3" stroke="#333" strokeWidth="2" />
          </Svg>
        </HBarDots>
        <HScroll>
          <Svg width="8" height="12" viewBox="0 0 8 12"><path d="M8 0v12L0 6z" fill="#6e6e6e" /></Svg>
          <HThumb />
          <Svg width="8" height="12" viewBox="0 0 8 12"><path d="M0 0v12l8-6z" fill="#6e6e6e" /></Svg>
        </HScroll>
      </SheetTabs>

      <StatusBar>
        Ready
        <TitleItem $ml={25}><AccessibilityIcon /></TitleItem>
        <StatusBold>Accessibility: Investigate</StatusBold>
        <StatusRight>
          <ViewButton $active><NormalViewIcon /></ViewButton>
          <ViewButton><PageViewIcon /></ViewButton>
          <ViewButton><BreakViewIcon /></ViewButton>
          <TitleItem $ml={10} $size={14}>−</TitleItem>
          <ZoomTrack><ZoomKnob /></ZoomTrack>
          <TitleItem $size={15}>+</TitleItem>
          <TitleItem $ml={19} $size={12}>100%</TitleItem>
        </StatusRight>
      </StatusBar>
      <BottomLine />

      <Watermark>
        <WatermarkAr>نفذلي</WatermarkAr>
        <WatermarkEn>nafezly.com</WatermarkEn>
      </Watermark>
    </Page>
  );
}
